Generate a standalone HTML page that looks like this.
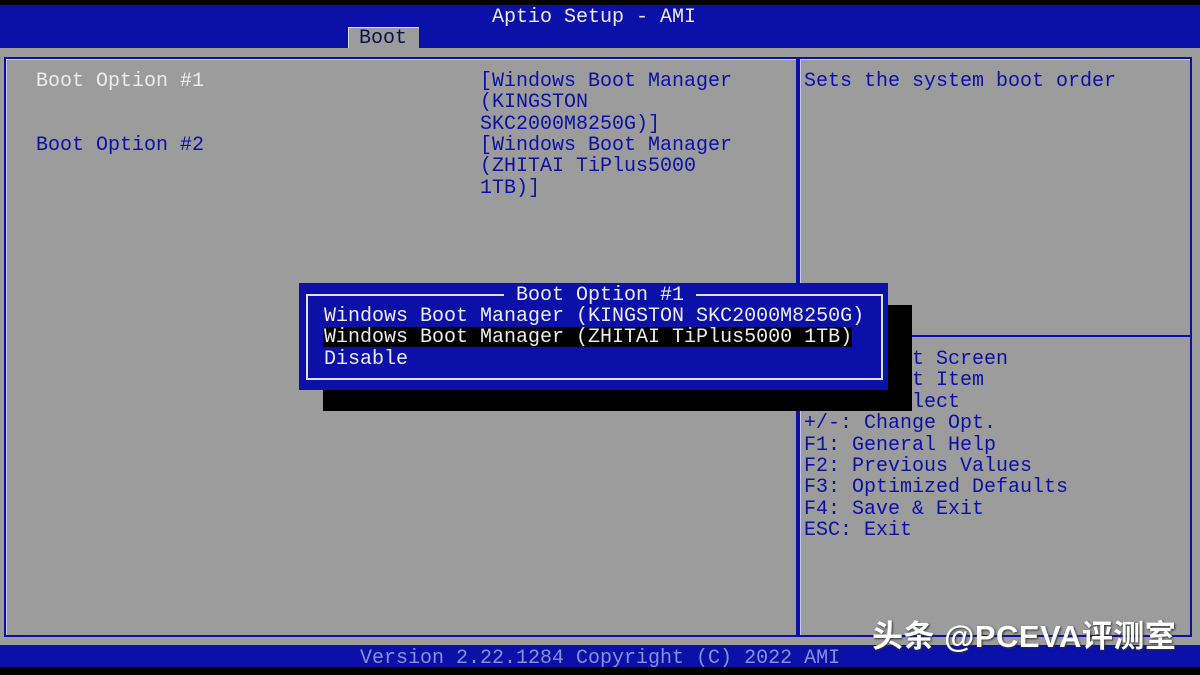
<!DOCTYPE html>
<html><head><meta charset="utf-8"><style>
*{margin:0;padding:0;box-sizing:border-box}
body{width:1200px;height:675px;background:#000;position:relative;overflow:hidden;font-family:"Liberation Mono","DejaVu Sans Mono",monospace;font-size:20px;}
.a{position:absolute;white-space:pre;line-height:21.4px}
.w{color:#ececec}.b{color:#0a10a8}
</style></head><body>
<div style="position:absolute;left:0;top:5px;width:1200px;height:43px;background:#0a10a8"></div>
<div class="a w" style="left:492px;top:7px">Aptio Setup - AMI</div>
<div style="position:absolute;left:348px;top:27px;width:71px;height:21px;background:#9c9c9c;border-top:1px solid #ddd;border-left:1px solid #ddd"></div>
<div class="a" style="left:359px;top:28px;color:#101048">Boot</div>
<div style="position:absolute;left:0;top:48px;width:1200px;height:597px;background:#9c9c9c"></div>
<div style="position:absolute;left:4px;top:57px;width:794px;height:580px;border:2px solid #0a10a8;box-shadow:inset 1px 1px 0 #c8c8ff"></div>
<div style="position:absolute;left:798px;top:57px;width:394px;height:580px;border:2px solid #0a10a8;box-shadow:inset 1px 1px 0 #c8c8ff"></div>
<div style="position:absolute;left:800px;top:335px;width:390px;height:2px;background:#0a10a8"></div>
<div class="a w" style="left:36px;top:71px">Boot Option #1</div>
<div class="a b" style="left:36px;top:135px">Boot Option #2</div>
<div class="a b" style="left:480px;top:71px">[Windows Boot Manager
(KINGSTON
SKC2000M8250G)]</div>
<div class="a b" style="left:480px;top:135px">[Windows Boot Manager
(ZHITAI TiPlus5000
1TB)]</div>
<div class="a b" style="left:804px;top:71px">Sets the system boot order</div>
<div class="a b" style="left:804px;top:349px">→←: Select Screen
↑↓: Select Item
Enter: Select
+/-: Change Opt.
F1: General Help
F2: Previous Values
F3: Optimized Defaults
F4: Save &amp; Exit
ESC: Exit</div>
<div style="position:absolute;left:323px;top:305px;width:589px;height:106px;background:#000"></div>
<div style="position:absolute;left:299px;top:283px;width:589px;height:107px;background:#0a10a8"></div>
<div style="position:absolute;left:306px;top:294px;width:577px;height:86px;border:2px solid #e0e0f0"></div>
<div class="a w" style="left:504px;top:285px;background:#0a10a8;padding:0 12px">Boot Option #1</div>
<div style="position:absolute;left:323px;top:327px;width:529px;height:20px;background:#000"></div>
<div class="a w" style="left:324px;top:306px">Windows Boot Manager (KINGSTON SKC2000M8250G)
Windows Boot Manager (ZHITAI TiPlus5000 1TB)
Disable</div>
<div style="position:absolute;left:0;top:645px;width:1200px;height:22px;background:#0a10a8"></div>
<div class="a" style="left:360px;top:648px;color:#8890d8">Version 2.22.1284 Copyright (C) 2022 AMI</div>
<div class="a" style="left:872px;top:617px;font-family:'Liberation Sans','Noto Sans CJK SC',sans-serif;font-size:31px;line-height:40px;color:#fff;font-weight:bold;letter-spacing:0.5px;text-shadow:1px 1px 2px #333">头条 @PCEVA评测室</div>
</body></html>
